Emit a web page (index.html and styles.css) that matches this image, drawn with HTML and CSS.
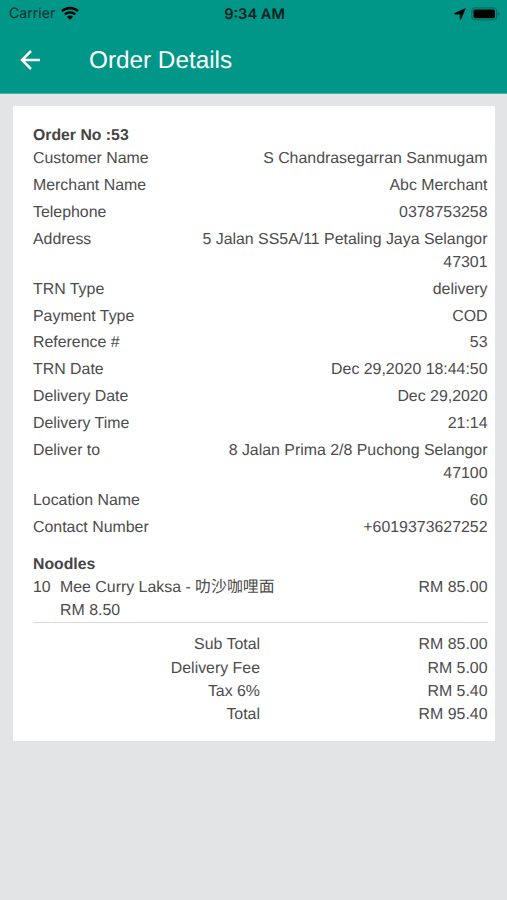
FILE: index.html
```html
<!DOCTYPE html>
<html lang="en">
<head>
<meta charset="utf-8">
<meta name="viewport" content="width=device-width, initial-scale=1">
<title>Order Details</title>
<link rel="stylesheet" href="styles.css">
</head>
<body>
<header class="app-header">
  <div class="status-bar">
    <div class="carrier">
      <span>Carrier</span>
      <svg class="wifi" viewBox="0 0 18 14" fill="none" stroke="#000" stroke-width="2.4">
        <path d="M1 5.2C5.500 .9 12.500 .9 17 5.200"/>
        <path d="M3.900 8.400C6.800 5.700 11.200 5.700 14.100 8.400"/>
        <path d="M9 13.800L6 10.700C7.700 9.200 10.300 9.200 12 10.700Z" fill="#000" stroke="none"/>
      </svg>
    </div>
    <span class="clock">9:34 AM</span>
    <div class="indicators">
      <svg class="location" viewBox="0 0 12 12"><path d="M11.400 .5L6.800 11.200Q6.300 11.700 6.100 11V6.200H1Q.1 6 .8 5.300Z" stroke="#000" stroke-width=".5"/></svg>
      <svg class="battery" viewBox="0 0 29 14">
        <rect x=".9" y=".8" width="24.700" height="12.200" rx="3.400" fill="none" stroke="#046b60" stroke-width="1.200"/>
        <rect x="2.500" y="2.500" width="21.500" height="8.800" rx="1.800"/>
        <path d="M26.800 4.800Q28.700 5.500 28.700 7T26.800 9.200Z" fill="#046b60"/>
      </svg>
    </div>
  </div>
  <div class="title-bar">
    <svg class="back" viewBox="0 0 22 22" fill="none" stroke="#fff" stroke-width="2.500"><path d="M20 11H3M11 2L2 11L11 20"/></svg>
    <h1>Order Details</h1>
  </div>
</header>
<main class="card">
  <h2>Order No :53</h2>
  <dl class="details">
    <div class="row"><dt>Customer Name</dt><dd>S Chandrasegarran Sanmugam</dd></div>
    <div class="row"><dt>Merchant Name</dt><dd>Abc Merchant</dd></div>
    <div class="row"><dt>Telephone</dt><dd>0378753258</dd></div>
    <div class="row"><dt>Address</dt><dd>5 Jalan SS5A/11 Petaling Jaya Selangor 47301</dd></div>
    <div class="row"><dt>TRN Type</dt><dd>delivery</dd></div>
    <div class="row"><dt>Payment Type</dt><dd>COD</dd></div>
    <div class="row"><dt>Reference #</dt><dd>53</dd></div>
    <div class="row"><dt>TRN Date</dt><dd>Dec 29,2020 18:44:50</dd></div>
    <div class="row"><dt>Delivery Date</dt><dd>Dec 29,2020</dd></div>
    <div class="row"><dt>Delivery Time</dt><dd>21:14</dd></div>
    <div class="row"><dt>Deliver to</dt><dd>8 Jalan Prima 2/8 Puchong Selangor 47100</dd></div>
    <div class="row"><dt>Location Name</dt><dd>60</dd></div>
    <div class="row"><dt>Contact Number</dt><dd>+6019373627252</dd></div>
  </dl>
  <h2 class="category">Noodles</h2>
  <div class="item">
    <span>10</span>
    <div><p>Mee Curry Laksa - <span class="cjk">叻沙咖哩面</span></p><p>RM 8.50</p></div>
    <span class="price">RM 85.00</span>
  </div>
  <dl class="totals">
    <dt>Sub Total</dt><dd>RM 85.00</dd>
    <dt>Delivery Fee</dt><dd>RM 5.00</dd>
    <dt>Tax 6%</dt><dd>RM 5.40</dd>
    <dt>Total</dt><dd>RM 95.40</dd>
  </dl>
</main>
</body>
</html>
```
FILE: styles.css
```css
* { box-sizing: border-box; margin: 0; padding: 0; }

body {
  min-height: 900px;
  background: #e2e4e6;
  color: #4c4c4c;
  font-family: "Liberation Sans", "Noto Sans CJK SC", sans-serif;
  font-size: 15.900px;
  line-height: 23.200px;
  text-rendering: geometricPrecision;
}

svg { display: block; flex: none; }

.app-header {
  height: 94px;
  background: #009788;
  border-bottom: 1px solid #4db1a7;
}

.status-bar {
  display: grid;
  grid-template-columns: 1fr auto 1fr;
  align-items: center;
  height: 27px;
  padding: 0 7px 0 9px;
  color: #062b27;
  font-family: Inter, sans-serif;
  font-size: 14.100px;
  line-height: 27px;
}

.carrier { display: flex; align-items: center; gap: 6px; }
.carrier span, .clock { padding-top: 1px; line-height: 26px; }
.wifi { width: 18px; height: 14px; margin-top: -2px; }
.clock { color: #03211e; font-weight: 600; font-size: 14.600px; }
.indicators { display: flex; align-items: center; justify-content: flex-end; gap: 5px; }
.location { width: 12px; height: 12px; }
.battery { width: 29px; height: 14px; }

.title-bar { display: flex; align-items: center; height: 66px; padding-left: 20px; }
.back { width: 22px; height: 22px; }
h1 { margin: 2px 0 0 47px; color: #fff; font-size: 24.300px; font-weight: 400; }

.card {
  width: 482px;
  height: 635px;
  margin: 12px 0 0 13px;
  padding: 17.800px 7.500px 0 20px;
  background: #fff;
}

h2 { font-size: 15.800px; font-weight: 700; line-height: 23.200px; color: #444; }
.row { display: flex; justify-content: space-between; margin-bottom: 3.680px; }
.row dd { width: 290px; text-align: right; }
.category { margin-top: 13.900px; }

.item {
  display: grid;
  grid-template-columns: 27px 1fr auto;
  height: 47px;
  border-bottom: 1px solid #d6d7d8;
}
.item p { height: 23.200px; white-space: nowrap; }
.cjk { font-family: "Noto Sans CJK SC", sans-serif; font-weight: 400; line-height: 1; }

.totals {
  display: grid;
  grid-template-columns: 227px 1fr;
  margin-top: 10.100px;
  text-align: right;
}
```
